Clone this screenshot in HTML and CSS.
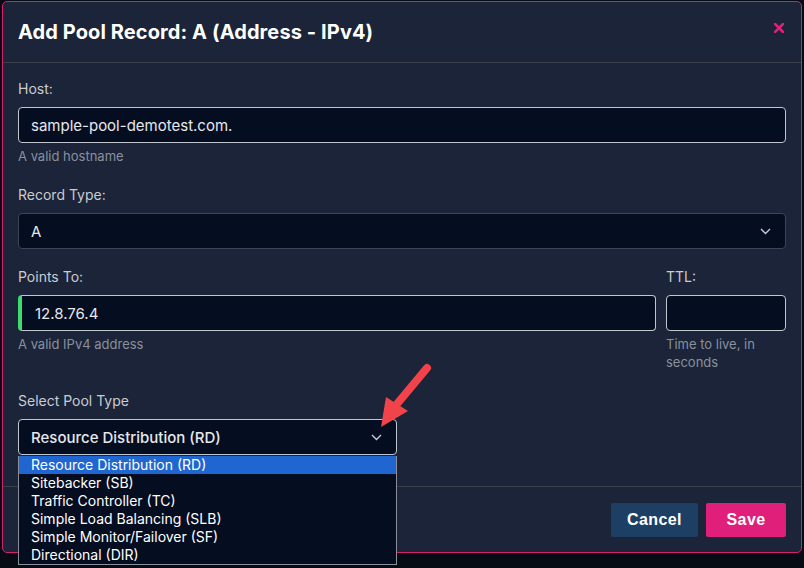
FILE: index.html
```html
<!DOCTYPE html>
<html lang="en">
<head>
  <meta charset="UTF-8" />
  <meta name="viewport" content="width=device-width, initial-scale=1.0">
  <title>Add Pool Record</title>
  <link rel="stylesheet" href="styles.css">
</head>
<body>
  <div class="modal">
    <div class="modal-header">
      <h1>Add Pool Record: A (Address - IPv4)</h1>
      <button class="close" type="button" aria-label="Close">
        <svg width="10" height="10" viewBox="0 0 10 10"><path d="M1 1L9 9M9 1L1 9" stroke="#e0207a" stroke-width="2.6" stroke-linecap="square"/></svg>
      </button>
    </div>

    <div class="modal-body">
      <div class="field host">
        <label>Host:</label>
        <div class="input light">sample-pool-demotest.com.</div>
        <div class="help">A valid hostname</div>
      </div>

      <div class="field">
        <label>Record Type:</label>
        <div class="input select dark">
          <span>A</span>
          <svg width="11" height="7" viewBox="0 0 11 7"><path d="M1 1L5.5 5.5L10 1" fill="none" stroke="#c8ccd4" stroke-width="1.4"/></svg>
        </div>
      </div>

      <div class="row">
        <div class="field grow">
          <label>Points To:</label>
          <div class="input light valid">12.8.76.4</div>
          <div class="help">A valid IPv4 address</div>
        </div>
        <div class="field ttl">
          <label>TTL:</label>
          <div class="input light"></div>
          <div class="help">Time to live, in seconds</div>
        </div>
      </div>

      <div class="field pool">
        <label>Select Pool Type</label>
        <div class="input select light">
          <span>Resource Distribution (RD)</span>
          <svg width="11" height="7" viewBox="0 0 11 7"><path d="M1 1L5.5 5.5L10 1" fill="none" stroke="#c8ccd4" stroke-width="1.4"/></svg>
        </div>
        <ul class="options">
          <li class="active">Resource Distribution (RD)</li>
          <li>Sitebacker (SB)</li>
          <li>Traffic Controller (TC)</li>
          <li>Simple Load Balancing (SLB)</li>
          <li>Simple Monitor/Failover (SF)</li>
          <li>Directional (DIR)</li>
        </ul>
      </div>
    </div>

    <div class="modal-footer">
      <button class="btn cancel" type="button">Cancel</button>
      <button class="btn save" type="button">Save</button>
    </div>
  </div>

  <!-- annotation arrow -->
  <svg class="pointer" width="70" height="80" viewBox="0 0 70 80">
    <path d="M56 14L26 50" stroke="#f2434a" stroke-width="8" stroke-linecap="round"/>
    <path d="M15 43L37 57L10 73Z" fill="#f2434a"/>
  </svg>
</body>
</html>
```

FILE: styles.css
```css
body {
  margin: 0;
  background: #070b14;
  font-family: Inter, "Noto Sans", sans-serif;
  color: #ffffff;
  height: 568px;
  overflow: hidden;
}
.modal {
  box-sizing: border-box;
  width: 800px;
  margin: 1px 0 0 2px;
  background: #1b2438;
  border: 1px solid #d81f6e;
  border-radius: 5px;
}
.modal-header {
  display: flex;
  justify-content: space-between;
  align-items: center;
  height: 60px;
  padding: 0 15px;
  border-bottom: 1px solid #3b3f48;
}
.modal-header h1 {
  margin: 0;
  font-size: 20px;
  font-weight: 700;
  letter-spacing: 0.1px;
}
.close {
  background: none;
  border: none;
  padding: 0;
  margin-right: 2px;
  margin-top: -9px;
  display: flex;
}
.modal-body {
  padding: 16px 15px 31px;
}
.field {
  margin-bottom: 18px;
}
.field.host {
  margin-bottom: 20px;
}
.field label {
  display: block;
  font-size: 14px;
  line-height: 20px;
  color: #c9ccd3;
  margin-bottom: 8px;
}
.input {
  box-sizing: border-box;
  height: 36px;
  padding: 0 12px;
  display: flex;
  align-items: center;
  background: #050d20;
  border-radius: 4px;
  font-size: 15px;
  color: #e6e8ec;
}
.input.light {
  border: 1px solid #c2c6ce;
}
.input.dark {
  border: 1px solid #3c4556;
}
.input.valid {
  border-left: 4px solid #3ddc6e;
  padding-left: 13px;
}
.select {
  justify-content: space-between;
  padding-right: 14px;
}
.help {
  font-size: 13px;
  line-height: 18px;
  color: #8a919e;
  margin-top: 4px;
}
.row {
  display: flex;
  gap: 10px;
  margin-bottom: 2px;
}
.row .field {
  margin-bottom: 18px;
}
.grow {
  flex: 1;
}
.ttl {
  width: 120px;
}
.pool {
  position: relative;
  width: 379px;
  margin-bottom: 0;
}
.pool .input {
  font-weight: 500;
}
.options {
  position: absolute;
  top: 100%;
  left: 0;
  right: 0;
  margin: 1px 0 0;
  padding: 0;
  list-style: none;
  background: #050d20;
  border: 1px solid #8a8f99;
  border-top: none;
  z-index: 2;
}
.options li {
  height: 18px;
  line-height: 18px;
  padding-left: 12px;
  font-size: 14px;
  color: #ffffff;
}
.options li.active {
  background: #1f66d1;
}
.modal-footer {
  display: flex;
  justify-content: flex-end;
  gap: 8px;
  padding: 16px 15px 15px;
  border-top: 1px solid #3b3f48;
}
.btn {
  height: 34px;
  border: none;
  border-radius: 2px;
  color: #ffffff;
  font-family: "Liberation Sans", Arial, sans-serif;
  font-size: 16px;
  font-weight: 700;
  letter-spacing: 0.4px;
}
.cancel {
  width: 87px;
  background: #1c3f63;
}
.save {
  width: 80px;
  background: #e01f7a;
}
.pointer {
  position: absolute;
  left: 371px;
  top: 354px;
  z-index: 3;
}
```
